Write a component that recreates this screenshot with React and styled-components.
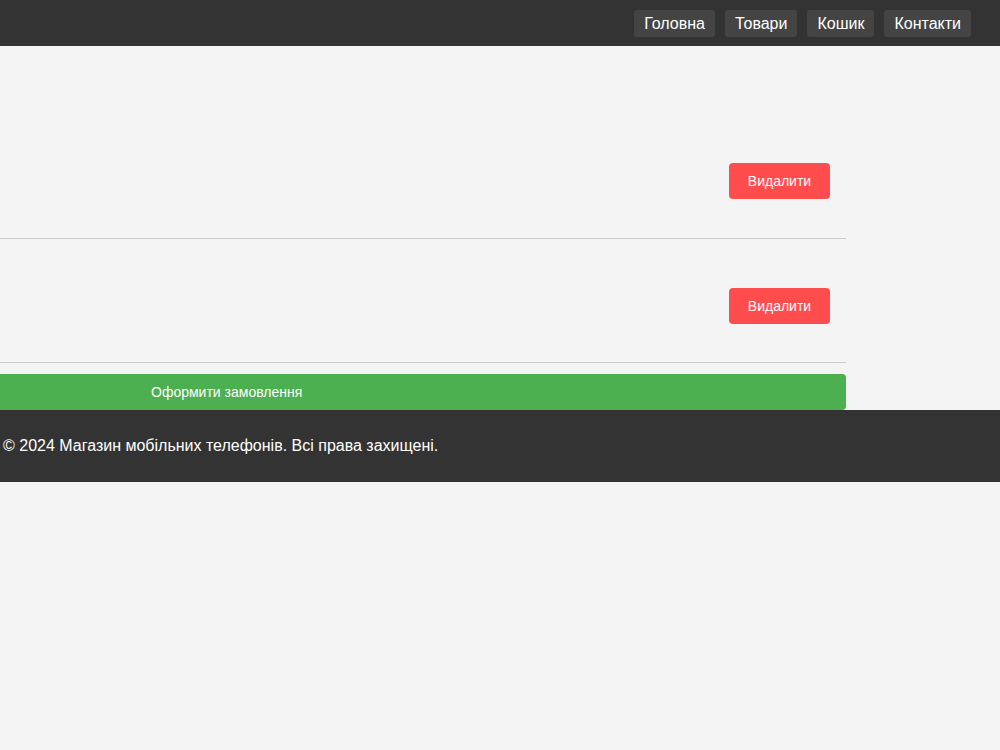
import styled, { createGlobalStyle } from "styled-components";

const Global = createGlobalStyle`
  body {
    margin: 0;
    background: #f4f4f4;
    font-family: Arial, "Liberation Sans", sans-serif;
  }
`;

const Header = styled.header`
  height: 46px;
  background: #333;
  display: flex;
  justify-content: flex-end;
  align-items: center;
  padding-right: 29px;
  gap: 10px;
`;

const NavLink = styled.a`
  background: #444;
  color: #fff;
  font-size: 16px;
  padding: 4px 10px;
  border-radius: 3px;
  line-height: 19px;
  text-decoration: none;
`;

const Cart = styled.main`
  width: 846px;
  padding-top: 69px;
`;

const Item = styled.div`
  height: 124px;
  border-bottom: 1px solid #ccc;
  display: flex;
  justify-content: flex-end;
  align-items: center;
  padding-right: 16px;
  padding-top: ${(p) => p.$shift}px;
  box-sizing: border-box;
`;

const RemoveButton = styled.button`
  width: 101px;
  height: 36px;
  background: #ff4d4d;
  color: #fff;
  border: none;
  border-radius: 4px;
  font-family: inherit;
  font-size: 14px;
`;

const CheckoutButton = styled.button`
  display: block;
  margin-top: 11px;
  width: 100%;
  height: 36px;
  background: #4caf50;
  color: #fff;
  border: none;
  border-radius: 0 4px 4px 0;
  font-family: inherit;
  font-size: 14px;
  text-align: left;
  padding-left: 151px;
`;

const Footer = styled.footer`
  height: 72px;
  background: #333;
  color: #fff;
  font-size: 16px;
  display: flex;
  align-items: center;
  padding-left: 3px;
`;

export default function App() {
  return (
    <>
      <Global />
      <Header>
        <NavLink>Головна</NavLink>
        <NavLink>Товари</NavLink>
        <NavLink>Кошик</NavLink>
        <NavLink>Контакти</NavLink>
      </Header>
      <Cart>
        <Item $shift={9}>
          <RemoveButton>Видалити</RemoveButton>
        </Item>
        <Item $shift={10}>
          <RemoveButton>Видалити</RemoveButton>
        </Item>
        <CheckoutButton>Оформити замовлення</CheckoutButton>
      </Cart>
      <Footer>© 2024 Магазин мобільних телефонів. Всі права захищені.</Footer>
    </>
  );
}
